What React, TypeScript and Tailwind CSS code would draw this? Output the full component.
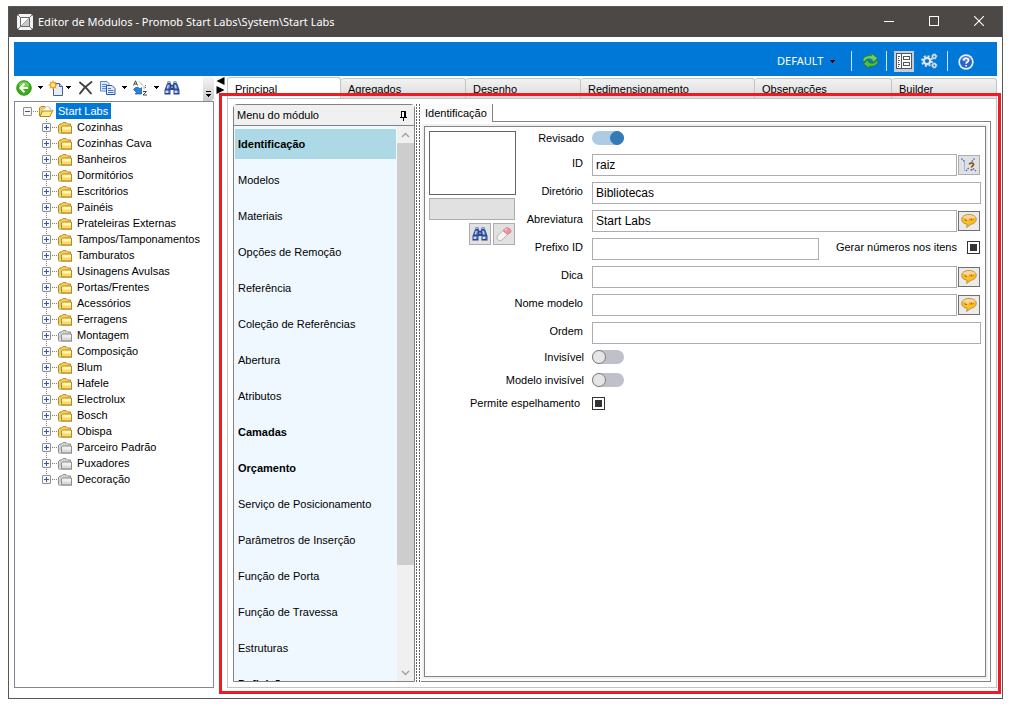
import { useEffect, useRef } from "react";
import type { ReactNode } from "react";

type Folder = { name: string; gray?: boolean };

const folders: Folder[] = [
  { name: "Cozinhas" },
  { name: "Cozinhas Cava" },
  { name: "Banheiros" },
  { name: "Dormitórios" },
  { name: "Escritórios" },
  { name: "Painéis" },
  { name: "Prateleiras Externas" },
  { name: "Tampos/Tamponamentos" },
  { name: "Tamburatos" },
  { name: "Usinagens Avulsas" },
  { name: "Portas/Frentes" },
  { name: "Acessórios" },
  { name: "Ferragens" },
  { name: "Montagem", gray: true },
  { name: "Composição" },
  { name: "Blum" },
  { name: "Hafele" },
  { name: "Electrolux" },
  { name: "Bosch" },
  { name: "Obispa" },
  { name: "Parceiro Padrão", gray: true },
  { name: "Puxadores", gray: true },
  { name: "Decoração", gray: true },
];

const menuItems: { name: string; bold?: boolean }[] = [
  { name: "Identificação", bold: true },
  { name: "Modelos" },
  { name: "Materiais" },
  { name: "Opções de Remoção" },
  { name: "Referência" },
  { name: "Coleção de Referências" },
  { name: "Abertura" },
  { name: "Atributos" },
  { name: "Camadas", bold: true },
  { name: "Orçamento", bold: true },
  { name: "Serviço de Posicionamento" },
  { name: "Parâmetros de Inserção" },
  { name: "Função de Porta" },
  { name: "Função de Travessa" },
  { name: "Estruturas" },
  { name: "Definição", bold: true },
];

const tabs = [
  { name: "Agregados", width: "w-[125px]" },
  { name: "Desenho", width: "w-[115px]" },
  { name: "Redimensionamento", width: "w-[174px]" },
  { name: "Observações", width: "w-[137px]" },
  { name: "Builder", width: "flex-1" },
];

function Caret({ className = "" }: { className?: string }) {
  return (
    <svg width="5" height="3" viewBox="0 0 5 3" className={className} shapeRendering="crispEdges">
      <path d="M0 0h5v1H4v1H3v1H2V2H1V1H0z" fill="#000" />
    </svg>
  );
}

function CaretButton({ label, className }: { label: string; className: string }) {
  return (
    <button aria-label={label} className={`flex h-5 items-center justify-center ${className}`}>
      <Caret />
    </button>
  );
}

function Binoculars() {
  return (
    <svg width="16" height="16" viewBox="0 0 16 16">
      <path d="M3.500 1.500h3v2h.5l.5 1.500h1L9 3.500h.5v-2h3v2h.7L15.500 10v4.500h-6V10h-3v4.500h-6V10L3 3.500h.5z" fill="#29488f" />
      <path d="M4 2.500h2M10 2.500h2" stroke="#9db7ea" />
      <path d="M3.700 4.500h2.200l-.4 4H2.300zM10 4.500h2.200l1.500 4h-3.300z" fill="#7292d4" />
      <path d="M3.800 5h1l-1 3.500h-1zM10.500 5h.9l1.200 3.500h-1z" fill="#d5e1fa" />
      <path d="M1.500 10.500h3V13h-3zM10.500 10.500h3V13h-3z" fill="#cfdcf7" />
      <path d="M4.500 10.500h1V13h-1zM13.500 10.500h1V13h-1z" fill="#6a8bd0" />
      <path d="M7.500 6.500h1v1.500h-1z" fill="#dfe8fb" />
    </svg>
  );
}

function FolderShape({ x, gray }: { x: number; gray?: boolean }) {
  const edge = gray ? "#8d8d8d" : "#b68a1c";
  const light = gray ? "#f1f1f1" : "#fff6b5";
  const mid = gray ? "#d2d2d2" : "#f6cf53";
  return (
    <g transform={`translate(${x} 2)`}>
      <path d="M.5 11.500V4.500L2 3h1.500L5 1.500h3L9.500 3h3v2" fill={mid} stroke={edge} />
      <path d="M3.500 12V6L4.500 5h9v7z" fill={light} stroke={edge} />
      <path d="M4 8.500h9v3H4z" fill={mid} opacity=".75" />
      <path d="M.5 12H14" stroke={edge} />
    </g>
  );
}

function Branch({ gray, last }: { gray?: boolean; last?: boolean }) {
  return (
    <svg width="32" height="16" viewBox="0 0 32 16" className="shrink-0">
      <path d={last ? "M5.500 0v8" : "M5.500 0v16"} stroke="#808080" strokeDasharray="1 1" />
      <path d="M11 8.500h6" stroke="#808080" strokeDasharray="1 1" />
      <rect x="1.500" y="4.500" width="8" height="8" rx=".5" fill="#f7f7f7" stroke="#8f8f8f" />
      <path d="M3 8.500h5M5.500 6v5" stroke="#3a55a4" />
      <FolderShape x={17} gray={gray} />
    </svg>
  );
}

function ToolbarLeft() {
  return (
    <div role="toolbar" aria-label="Árvore" className="flex h-[25px] items-center pl-0.5">
      <div className="flex items-center pb-0.5">
        <button aria-label="Voltar">
          <svg width="16" height="16" viewBox="0 0 16 16">
            <circle cx="8" cy="8" r="7.300" fill="#38b016" stroke="#23820c" strokeWidth=".8" />
            <ellipse cx="8" cy="4.800" rx="5.300" ry="3.300" fill="#8fdc6c" opacity=".7" />
            <path d="M8.500 3.800L4.300 8l4.200 4.200M4.800 8h7.400" fill="none" stroke="#fff" strokeWidth="2" />
          </svg>
        </button>
        <CaretButton label="Opções de voltar" className="w-4" />
        <button aria-label="Novo">
          <svg width="16" height="16" viewBox="0 0 16 16">
            <path d="M5.500 3.500h6l3 3v9h-9z" fill="#e6eefb" stroke="#4a5f8c" />
            <path d="M11.500 3.500v3h3" fill="#c3d3ee" stroke="#4a5f8c" />
            <path
              d="M5 0l1.100 2.300L8.500 1.500l-.8 2.400L10 5l-2.300 1.100.8 2.400-2.400-.8L5 10 3.900 7.700l-2.400.8.8-2.400L0 5l2.300-1.100-.8-2.400 2.400.8z"
              fill="#f0a21c"
            />
            <circle cx="5" cy="5" r="2" fill="#fff0a0" />
          </svg>
        </button>
        <CaretButton label="Opções de novo" className="w-2" />
        <button aria-label="Excluir" className="ml-1.5">
          <svg width="16" height="16" viewBox="0 0 16 16">
            <path d="M2 2.500c4 3 8 7 11 11M13.500 2C9 5 5 9 2 13.500" fill="none" stroke="#3f3f3f" strokeWidth="1.900" strokeLinecap="round" />
          </svg>
        </button>
        <button aria-label="Copiar" className="ml-1.5">
          <svg width="16" height="16" viewBox="0 0 16 16">
            <path d="M.5 1.500h6.500l2 2v7.500H.5z" fill="#dce8fb" stroke="#6285c4" />
            <path d="M2 4.500h5M2 6.500h4M2 8.500h4" stroke="#5f8ad3" />
            <path d="M6.500 5.500H12l3 3v6H6.500z" fill="#e3edfd" stroke="#2f559f" />
            <path d="M8 8.500h3M8 10.500h5.500M8 12.500h5.500" stroke="#3f72c8" />
          </svg>
        </button>
        <CaretButton label="Opções de copiar" className="w-4" />
        <button aria-label="Ordenar de A a Z">
          <svg width="16" height="16" viewBox="0 0 16 16">
            <path d="M1.500 5.500L3.500.8l2 4.700M2.300 4h2.500" fill="none" stroke="#444" />
            <path d="M11 11.500h3.500l-3.500 3.500H15" fill="none" stroke="#444" />
            <path d="M7 1.500l6 6M13.500 5v3h-3" fill="none" stroke="#6b6b6b" strokeDasharray="1 1" />
            <path d="M3.500 7.500h3l1.500 1.500L9.500 7.500v6.500H3l1.500-1.500-3-3z" fill="#2581db" stroke="#1557a9" strokeWidth=".7" />
          </svg>
        </button>
        <CaretButton label="Opções de ordenar" className="w-4" />
        <button aria-label="Localizar">
          <Binoculars />
        </button>
      </div>
      <button
        aria-label="Mais comandos"
        className="ml-auto flex h-[25px] w-[11px] flex-col items-center justify-end gap-0.5 rounded-r-sm bg-linear-to-b from-[#f7f7f7] to-[#c9c9c9] pb-1"
      >
        <span className="h-px w-[5px] bg-black" />
        <Caret />
      </button>
    </div>
  );
}

function Tree() {
  return (
    <aside className="flex w-[200px] shrink-0 flex-col">
      <ToolbarLeft />
      <div className="min-h-0 flex-1 overflow-hidden border border-[#82879a] bg-white pt-px">
        <div className="flex h-4 items-center pl-2">
          <button aria-label="Recolher Start Labs" className="shrink-0">
            <svg width="33" height="16" viewBox="0 0 33 16" className="block">
              <rect x=".5" y="4.500" width="8" height="8" rx=".5" fill="#f7f7f7" stroke="#8f8f8f" />
              <path d="M2 8.500h5" stroke="#3a55a4" />
              <path d="M10 8.500h6" stroke="#808080" strokeDasharray="1 1" />
              <path d="M16.500 13V5l1.500-1.500h4L23.500 5H27v2" fill="#f6cf53" stroke="#b68a1c" />
              <path d="M19 7l6-4 3 4-1 5h-8z" fill="#fff" stroke="#b3b3a6" strokeWidth=".7" />
              <path d="M17 13.500L19.500 8h9l1.500-1-3 6.500z" fill="#ffe98b" stroke="#b68a1c" />
            </svg>
          </button>
          <button className="h-4 bg-[#0078d7] pr-[3px] pb-0.5 pl-0.5 text-white">Start Labs</button>
        </div>
        <ul>
          {folders.map((f, i) => (
            <li key={f.name} className="flex h-4 items-center pl-[26px]">
              <button aria-label={`Expandir ${f.name}`} className="shrink-0">
                <Branch gray={f.gray} last={i === folders.length - 1} />
              </button>
              <button className="h-4 px-1 pb-0.5 whitespace-nowrap">{f.name}</button>
            </li>
          ))}
        </ul>
      </div>
    </aside>
  );
}

function ModuleMenu() {
  return (
    <nav aria-label="Menu do módulo" className="flex w-[182px] shrink-0 flex-col rounded-t-sm border border-[#828282]">
      <div className="flex h-[21px] shrink-0 items-center justify-between border-b border-[#828282] bg-[#f0f0f0] pr-1.5 pl-[3px]">
        <span>Menu do módulo</span>
        <button aria-label="Fixar menu" className="pt-0.5">
          <svg width="9" height="12" viewBox="0 0 9 12" shapeRendering="crispEdges">
            <path d="M2 1h5v6h1v1H5v3H4V8H1V7h1z" fill="#000" />
            <path d="M3 2h2v5H3z" fill="#fff" />
          </svg>
        </button>
      </div>
      <div className="flex min-h-0 flex-1 bg-[#eff7ff]">
        <ul className="flex flex-1 flex-col gap-1.5 overflow-hidden pt-[3px] pr-px pl-px">
          {menuItems.map((m, i) => (
            <li key={m.name} className="shrink-0">
              <button
                className={`flex h-[30px] w-full items-center pl-[3px] text-left whitespace-nowrap ${
                  i === 0 ? "bg-[#add8e6]" : ""
                } ${m.bold ? "font-bold" : ""}`}
              >
                {m.name}
              </button>
            </li>
          ))}
        </ul>
        <div className="flex w-[17px] flex-col bg-[#f0f0f0]">
          <button aria-label="Rolar para cima" className="flex h-[17px] items-center justify-center">
            <svg width="9" height="6" viewBox="0 0 9 6">
              <path d="M1 5l3.500-3.500L8 5" fill="none" stroke="#a0a0a0" strokeWidth="1.400" />
            </svg>
          </button>
          <div className="flex-1">
            <div className="h-[81%] bg-[#cdcdcd]" />
          </div>
          <button aria-label="Rolar para baixo" className="flex h-[17px] items-center justify-center">
            <svg width="9" height="6" viewBox="0 0 9 6">
              <path d="M1 1l3.500 3.500L8 1" fill="none" stroke="#a0a0a0" strokeWidth="1.400" />
            </svg>
          </button>
        </div>
      </div>
    </nav>
  );
}

function Balloon() {
  return (
    <svg width="16" height="16" viewBox="0 0 16 16">
      <path
        d="M8 1.500c4.200 0 7.300 2 7.300 4.800 0 2.700-2.300 4.500-5.300 5L5.500 14.500l.8-3.200C3 11 .7 9.200.7 6.300c0-2.800 3.100-4.800 7.300-4.800z"
        fill="#fbc21d"
        stroke="#a98545"
        strokeWidth=".8"
      />
      <ellipse cx="8" cy="4.300" rx="5.800" ry="2.300" fill="#ffd596" />
      <path d="M4 5.500v2h2M9 5.500v2M10.500 5.500v2M12 5.500v2" fill="none" stroke="#d5601b" />
    </svg>
  );
}

function BalloonButton({ label }: { label: string }) {
  return (
    <button
      type="button"
      aria-label={label}
      className="mr-px ml-px flex h-5 w-[22px] shrink-0 items-center justify-center border border-[#707070] bg-[#ebebeb]"
    >
      <Balloon />
    </button>
  );
}

function Field({
  id,
  label,
  value = "",
  wide,
  className = "flex-1",
  children,
}: {
  id: string;
  label: string;
  value?: string;
  wide?: boolean;
  className?: string;
  children?: ReactNode;
}) {
  return (
    <div className="flex h-[22px] items-center">
      <label
        htmlFor={id}
        className={`mr-2 shrink-0 pr-px pb-1 text-right whitespace-nowrap ${wide ? "w-[155px]" : "w-[68px]"}`}
      >
        {label}
      </label>
      <input
        id={id}
        type="text"
        defaultValue={value}
        className={`h-[22px] min-w-0 border border-[#abadb3] bg-white px-[3px] text-xs text-black outline-none ${className}`}
      />
      {children}
    </div>
  );
}

const switchClass =
  "relative h-3.5 w-8 shrink-0 appearance-none rounded-full bg-[#bfc0ca] before:absolute before:top-0 before:left-0 before:h-3.5 before:w-3.5 before:rounded-full before:border before:border-[#7d7d7d] before:bg-[#e5e5e5] checked:bg-[#afcae3] checked:before:right-0 checked:before:left-auto checked:before:border-[#337ab7] checked:before:bg-[#337ab7]";

function Switch({ id, label, wide, on }: { id: string; label: string; wide?: boolean; on?: boolean }) {
  return (
    <div className="flex h-[17px] items-start">
      <label
        htmlFor={id}
        className={`mr-2 shrink-0 text-right leading-[14px] whitespace-nowrap ${wide ? "w-[155px]" : "w-[68px]"}`}
      >
        {label}
      </label>
      <input id={id} type="checkbox" role="switch" defaultChecked={on} className={switchClass} />
    </div>
  );
}

function TriCheckbox({ id }: { id: string }) {
  const ref = useRef<HTMLInputElement>(null);
  useEffect(() => {
    if (ref.current) ref.current.indeterminate = true;
  }, []);
  return (
    <input
      ref={ref}
      id={id}
      type="checkbox"
      className="flex h-[13px] w-[13px] shrink-0 appearance-none items-center justify-center border border-[#333] bg-white indeterminate:before:h-[7px] indeterminate:before:w-[7px] indeterminate:before:bg-[#333]"
    />
  );
}

function Identification() {
  return (
    <form className="flex flex-1 flex-col gap-1.5 border border-[#828282] bg-white p-1">
      <div className="flex">
        <div className="flex w-[87px] shrink-0 flex-col gap-[3px]">
          <div className="h-16 border border-[#646464] bg-white" />
          <input
            aria-label="Imagem"
            disabled
            className="h-[22px] w-[86px] border border-[#adadad] bg-[#e1e1e1]"
          />
          <div className="flex justify-end gap-0.5 pr-px">
            <button
              type="button"
              aria-label="Localizar imagem"
              className="flex h-[22px] w-[22px] items-center justify-center border border-[#adadad] bg-[#e1e1e1]"
            >
              <Binoculars />
            </button>
            <button
              type="button"
              aria-label="Limpar imagem"
              className="flex h-[22px] w-[22px] items-center justify-center border border-[#adadad] bg-[#e1e1e1]"
            >
              <svg width="16" height="16" viewBox="0 0 16 16">
                <path d="M1.500 13.500C.8 12.500 1 11 1.500 10L7 4.500l4.500 4L6 14c-1.500 1-3.500.8-4.500-.5z" fill="#f6f4f2" stroke="#a9a4a1" strokeWidth=".8" />
                <path d="M7 4.500L10 2c2-1.300 5.800 1.500 4.800 4.200L11.500 8.500z" fill="#f0929d" stroke="#c77e86" strokeWidth=".8" />
                <path d="M9 4.200l2-1.400" stroke="#fbd5d9" strokeWidth="1.200" />
              </svg>
            </button>
          </div>
        </div>
        <div className="flex min-w-0 flex-1 flex-col gap-1.5">
          <Switch id="revisado" label="Revisado" on />
          <Field id="fid" label="ID" value="raiz">
            <button
              type="button"
              aria-label="Gerar ID"
              className="mr-px ml-px flex h-5 w-[22px] shrink-0 items-center justify-center border border-[#adadad] bg-[#e1e1e1]"
            >
              <svg width="16" height="16" viewBox="0 0 16 16">
                <path d="M.5 1.500l3 3M13.500 1.500l-3.500 4M5 14l3-3.500M12 11.500l3.500 3" fill="none" stroke="#2f5be0" strokeDasharray="1.500 1" strokeWidth="1.200" />
                <path d="M3.500 4.500v9" stroke="#20a3e8" strokeDasharray="1 1" />
                <path d="M8.500 7.500c0-2 4-2 4 0 0 1.500-2 1.300-2 3M10.500 12v1.500" fill="none" stroke="#8a4d12" strokeWidth="1.700" />
              </svg>
            </button>
          </Field>
          <Field id="diretorio" label="Diretório" value="Bibliotecas" />
          <Field id="abreviatura" label="Abreviatura" value="Start Labs">
            <BalloonButton label="Traduzir abreviatura" />
          </Field>
          <Field id="prefixo" label="Prefixo ID" className="w-[227px]">
            <div className="mr-px ml-auto flex items-center gap-2.5 pb-1 pl-3">
              <label htmlFor="gerar" className="whitespace-nowrap">
                Gerar números nos itens
              </label>
              <TriCheckbox id="gerar" />
            </div>
          </Field>
        </div>
      </div>
      <Field id="dica" label="Dica" wide>
        <BalloonButton label="Traduzir dica" />
      </Field>
      <Field id="nome" label="Nome modelo" wide>
        <BalloonButton label="Traduzir nome modelo" />
      </Field>
      <Field id="ordem" label="Ordem" wide />
      <Switch id="invisivel" label="Invisível" wide />
      <Switch id="modelo-invisivel" label="Modelo invisível" wide />
      <div className="flex h-[17px] items-start gap-2">
        <label htmlFor="espelhamento" className="w-[155px] pr-1 text-right leading-[14px] whitespace-nowrap">
          Permite espelhamento
        </label>
        <span className="flex pt-px">
          <TriCheckbox id="espelhamento" />
        </span>
      </div>
    </form>
  );
}

function HeaderBar() {
  return (
    <header className="flex h-[34px] shrink-0 items-center justify-end bg-[#0078d7] pt-1 pr-[23px]">
      <div className="relative flex items-center">
        <select
          aria-label="Perfil"
          className="w-[60px] appearance-none bg-transparent font-['Noto_Sans',sans-serif] text-[11px] text-white outline-none"
        >
          <option>DEFAULT</option>
        </select>
        <Caret className="pointer-events-none absolute right-0.5" />
      </div>
      <span className="ml-[14px] h-5 w-px bg-[#cfe5f8]" />
      <button aria-label="Atualizar" className="ml-2.5">
        <svg width="17" height="16" viewBox="0 0 17 16">
          <path d="M1 8C.8 4.500 4.500 2 9.500 2.800L9.300.5 15.500 5l-4.300 4.500-.8-2.700C7.500 5.200 4 5.500 2.500 8.500z" fill="#6fd05a" stroke="#2c8b25" strokeWidth=".8" />
          <path d="M16 8c.2 3.500-3.500 6-8.500 5.200l.2 2.300L1.500 11l4.300-4.500.8 2.700c2.900 1.600 6.400 1.300 7.900-1.700z" fill="#57bd45" stroke="#23761d" strokeWidth=".8" />
        </svg>
      </button>
      <span className="ml-[7px] h-5 w-px bg-[#cfe5f8]" />
      <button aria-label="Propriedades" className="ml-[7px] flex h-[21px] w-5 items-center justify-center bg-[#c3cddb]">
        <svg width="16" height="16" viewBox="0 0 16 16" shapeRendering="crispEdges">
          <rect x=".5" y=".5" width="15" height="15" fill="#fff" stroke="#555" />
          <path d="M5.500 1v14M2 3.500h2M2 5.500h1M2 7.500h2M2 9.500h1M2 11.500h2M2 13.500h1" stroke="#555" />
          <rect x="7.500" y="3.500" width="6" height="3" fill="#fff" stroke="#555" />
          <rect x="7.500" y="9.500" width="6" height="3" fill="#fff" stroke="#555" />
        </svg>
      </button>
      <button aria-label="Configurações" className="ml-[7px]">
        <svg width="17" height="16" viewBox="0 0 17 16">
          <circle cx="6" cy="8" r="3.200" fill="none" stroke="#e6e6e6" strokeWidth="2.200" />
          <circle cx="6" cy="8" r="5" fill="none" stroke="#e6e6e6" strokeWidth="1.800" strokeDasharray="2 1.927" />
          <circle cx="13.300" cy="3.500" r="1.700" fill="none" stroke="#e6e6e6" strokeWidth="1.400" />
          <circle cx="13.300" cy="3.500" r="2.600" fill="none" stroke="#e6e6e6" strokeDasharray="1 1.040" />
          <circle cx="13.300" cy="12.500" r="1.700" fill="none" stroke="#e6e6e6" strokeWidth="1.400" />
          <circle cx="13.300" cy="12.500" r="2.600" fill="none" stroke="#e6e6e6" strokeDasharray="1 1.040" />
        </svg>
      </button>
      <span className="ml-[9px] h-5 w-px bg-[#cfe5f8]" />
      <button aria-label="Ajuda" className="ml-2.5 pt-0.5">
        <svg width="16" height="16" viewBox="0 0 16 16">
          <circle cx="8" cy="8" r="7.700" fill="#e8edf8" />
          <circle cx="8" cy="8" r="6" fill="#2b62ce" />
          <ellipse cx="8" cy="5" rx="4.500" ry="2.700" fill="#6d9ae8" opacity=".7" />
          <path d="M5.700 6.500c0-3 4.700-3 4.700 0 0 1.700-2.300 1.600-2.300 3.300M8.100 11v1.600" fill="none" stroke="#fff" strokeWidth="1.700" />
        </svg>
      </button>
    </header>
  );
}

function Titlebar() {
  return (
    <div className="flex h-[30px] shrink-0 items-center bg-[#4b4846] pr-3 pl-2 text-white">
      <svg width="16" height="16" viewBox="0 0 16 16">
        <path d="M2 0h12l2 2v12l-2 2H2l-2-2V2z" fill="#f3f3f3" />
        <rect x="3.500" y="3.500" width="9" height="9" fill="#fff" stroke="#6a6a6a" />
        <path d="M1 1l2.500 2.500M15 1l-2.500 2.500M1 15l2.500-2.500M15 15l-2.500-2.500" stroke="#777" />
        <path d="M4 12L12 4v8z" fill="#c8c8c8" />
        <path d="M4 12L12 4" stroke="#8c8c8c" strokeWidth=".7" />
      </svg>
      <h1 className="ml-[5px] flex-1 truncate font-['Noto_Sans',sans-serif] text-[11px]">
        Editor de Módulos - Promob Start Labs\System\Start Labs
      </h1>
      <div className="flex gap-[25px] pr-px pb-0.5">
        <button aria-label="Minimizar" className="flex w-5 justify-center">
          <svg width="10" height="10" viewBox="0 0 10 10">
            <path d="M0 5.500h10" stroke="#fff" />
          </svg>
        </button>
        <button aria-label="Maximizar" className="flex w-5 justify-center">
          <svg width="10" height="10" viewBox="0 0 10 10">
            <rect x=".5" y=".5" width="9" height="9" fill="none" stroke="#fff" />
          </svg>
        </button>
        <button aria-label="Fechar" className="flex w-5 justify-center">
          <svg width="10" height="10" viewBox="0 0 10 10">
            <path d="M0 0l10 10M10 0L0 10" stroke="#fff" strokeWidth="1.100" />
          </svg>
        </button>
      </div>
    </div>
  );
}

export default function App() {
  return (
    <div className="flex h-screen min-h-[480px] bg-white pt-1.5 pr-[11px] pb-[7px] pl-2 font-['Liberation_Sans',Arial,sans-serif] text-[11px] leading-4 text-black">
      <main className="flex min-w-0 flex-1 flex-col border border-[#5a5856] bg-white">
        <Titlebar />
        <div className="flex min-h-0 flex-1 flex-col px-[5px] pt-[5px] pb-2.5">
          <HeaderBar />
          <div className="flex min-h-0 flex-1">
            <Tree />
            <div className="flex w-[13px] shrink-0 flex-col items-center gap-px pt-px">
              <button aria-label="Recolher painel">
                <svg width="9" height="8" viewBox="0 0 9 8" className="block">
                  <path d="M8.500 0v8L.5 4z" fill="#000" />
                </svg>
              </button>
              <button aria-label="Expandir painel">
                <svg width="9" height="8" viewBox="0 0 9 8" className="block">
                  <path d="M.5 0v8l8-4z" fill="#000" />
                </svg>
              </button>
            </div>
            <section className="relative flex min-w-0 flex-1 flex-col">
              <div role="tablist" className="flex h-[22px] items-end pt-px">
                <button
                  role="tab"
                  aria-selected="true"
                  className="flex h-[21px] w-[114px] items-start rounded-t-[3px] border border-b-0 border-[#c4c4c4] bg-white pt-[3px] pl-[7px]"
                >
                  Principal
                </button>
                {tabs.map((t) => (
                  <button
                    key={t.name}
                    role="tab"
                    aria-selected="false"
                    className={`flex h-5 items-start overflow-hidden rounded-t-[3px] border-t border-r border-[#c4c4c4] bg-linear-to-b from-[#f2f2f2] to-[#dcdcdc] pt-0.5 pl-[7px] ${t.width}`}
                  >
                    {t.name}
                  </button>
                ))}
              </div>
              <div className="flex min-h-0 flex-1 border border-[#c4c4c4] bg-white p-[5px]">
                <ModuleMenu />
                <div className="flex w-1.5 shrink-0 justify-center gap-0.5">
                  <span className="w-px bg-[repeating-linear-gradient(to_bottom,#606060_0px_2px,#ffffff_2px_3px)]" />
                  <span className="w-px bg-[repeating-linear-gradient(to_bottom,#606060_0px_2px,#ffffff_2px_3px)]" />
                </div>
                <div className="flex min-w-0 flex-1 flex-col">
                  <div role="tablist" className="flex h-[18px]">
                    <button role="tab" aria-selected="true" className="w-[72px] border-r border-[#828282] bg-[#fbfbfb] pl-1 text-left">
                      Identificação
                    </button>
                    <span className="flex-1 border-b border-[#828282]" />
                  </div>
                  <div className="flex min-h-0 flex-1 border-r border-b border-[#828282] pt-0.5 pr-0.5 pb-0.5 pl-px">
                    <div className="flex min-w-0 flex-1 bg-[#f0f0f0] p-0.5">
                      <Identification />
                    </div>
                  </div>
                </div>
              </div>
              <div className="pointer-events-none absolute top-[17px] -right-1 -bottom-1.5 -left-2 border-3 border-[#ed1c24]" />
            </section>
          </div>
        </div>
      </main>
    </div>
  );
}
